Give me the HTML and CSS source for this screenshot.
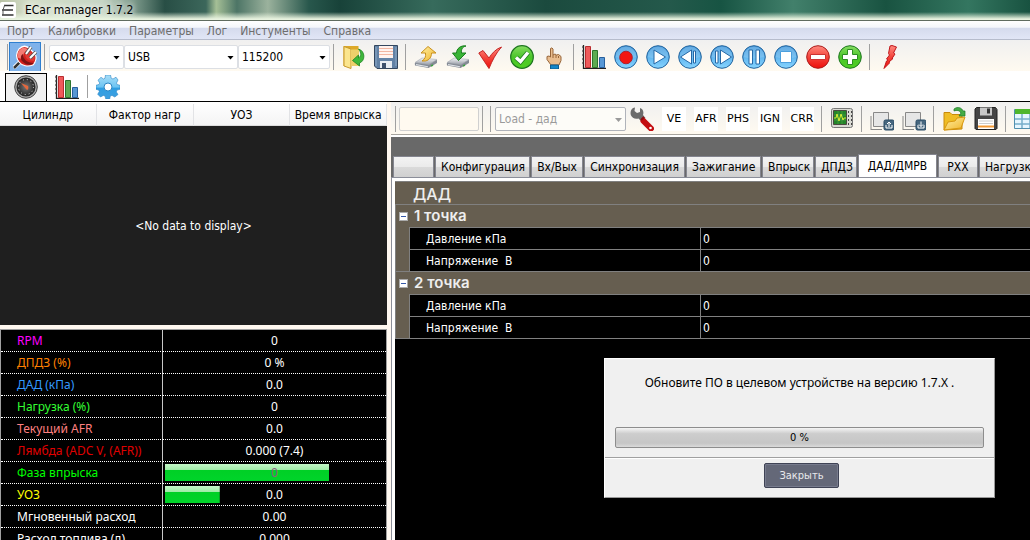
FILE: index.html
```
<!DOCTYPE html>
<html lang="ru">
<head>
<meta charset="utf-8">
<title>ECar manager 1.7.2</title>
<link rel="stylesheet" href="styles.css">
</head>
<body>
<svg class="defs" aria-hidden="true">
  <defs>
    <linearGradient id="blue" x2="0" y2="1"><stop offset="0" stop-color="#4a9bdc"/><stop offset=".5" stop-color="#62b6ee"/><stop offset="1" stop-color="#86d4ff"/></linearGradient>
    <linearGradient id="red" x2="0" y2="1"><stop offset="0" stop-color="#ff8a80"/><stop offset=".5" stop-color="#f4453c"/><stop offset="1" stop-color="#ee0f0a"/></linearGradient>
    <linearGradient id="green" x2="0" y2="1"><stop offset="0" stop-color="#86dd62"/><stop offset=".5" stop-color="#4bc52a"/><stop offset="1" stop-color="#4fd021"/></linearGradient>
    <linearGradient id="gold" x2="1" y2="1"><stop offset="0" stop-color="#fff0a4"/><stop offset="1" stop-color="#f0b429"/></linearGradient>
    <linearGradient id="gear" x2="0" y2="1"><stop offset="0" stop-color="#a9def8"/><stop offset=".5" stop-color="#6cc4f2"/><stop offset=".55" stop-color="#2f9ee2"/><stop offset="1" stop-color="#3f9fe0"/></linearGradient>
    <linearGradient id="steel" x2="0" y2="1"><stop offset="0" stop-color="#f4f5f8"/><stop offset="1" stop-color="#9ca1aa"/></linearGradient>
    <radialGradient id="dial"><stop offset="0" stop-color="#777"/><stop offset="1" stop-color="#222"/></radialGradient>
    <symbol id="i-ball" viewBox="0 0 24 24"><circle cx="12" cy="12" r="11.3" fill="url(#blue)" stroke="#23639c"/><path d="M1.8 12a10.2 10.2 0 0 1 20.4 0q-10 3-20.4 0z" fill="#fff" opacity=".15"/></symbol>
    <symbol id="i-chart" viewBox="0 0 24 24"><path d="M1.5 0v23.500H24" fill="none" stroke="#222" stroke-width="1.300"/><path d="M0 2h2M0 6h2M0 10h2M0 14h2M0 18h2" stroke="#333"/><path d="M3.500 1.500h5v21h-5z" fill="#ef5a5a" stroke="#b92c2f"/><path d="M10.500 5.500h5v17h-5z" fill="#5cab52" stroke="#2c742e"/><path d="M17.500 12.500h5v10h-5z" fill="#5898d5" stroke="#285f9c"/></symbol>
    <symbol id="i-disk" viewBox="0 0 24 24"><path d="M.5 .5h23v23H3L.5 21z" fill="#6382a5" stroke="#34475f"/><path d="M5 1h14v12H5z" fill="#fff3ef"/><path d="M5 3.500h14M5 6.500h14M5 9.500h14" stroke="#f2b6a2"/><path d="M2 2v19M22 2v19" stroke="#8fabc8"/><path d="M6 16h12v7H6z" fill="#e9edf2"/><path d="M8 18h4v5H8z" fill="#3d506b"/></symbol>
    <symbol id="i-drive" viewBox="0 0 24 24"><path d="M.8 18 8 13.500l15 1.500v3l-8.500 5L1 20.500z" fill="#858b95"/><path d="M1 17.500 8 13l15 1.500-8 5z" fill="url(#steel)" stroke="#a7acb4" stroke-width=".6"/><path d="M2 19l12 2.300v1L2 20.300z" fill="#dfe3e7"/><path d="M17 21l2-1" stroke="#3ea143" stroke-width="1.500"/></symbol>
  </defs>
</svg>

<div class="app">
  <header class="titlebar">
    <svg class="logo" viewBox="0 0 16 16"><rect width="16" height="16" rx="2" fill="#fff"/><path d="M4 3.500h9.500M2 8h11M2 13h11.500" stroke="#333" stroke-width="1.500" fill="none"/><path d="M4.500 3.500 3 8v5" fill="none" stroke="#555"/></svg>
    <h1>ECar manager 1.7.2</h1>
  </header>

  <nav class="menu">
    <button>Порт</button><button>Калибровки</button><button>Параметры</button><button>Лог</button><button>Инстументы</button><button>Справка</button>
  </nav>

  <div class="toolbar main-tools">
    <span class="sep"></span>
    <button class="connect" aria-label="Подключить"><svg viewBox="0 0 24 24"><path d="M7 17 .5 23" stroke="#fff" stroke-width="4"/><path d="M7 17 1 23" stroke="#333" stroke-width="2.500"/><path d="M6 4c4-4 8-3 11 0l5 5c2 3 1 8-2 11-5 2-11 1-14-3-3-4-3-9 0-13z" fill="#d3201d" stroke="#fff" stroke-width="1.200"/><path d="M6.500 5c4-4 7-2 9 0-4 1-6 4-5 8-2 1-4 1-6-1 0-3 .5-5 2-7z" fill="#f47b73"/><path d="M10 9c0 5 4 9 11 9-3 3-9 2-12-2-2-3-1-6 1-7z" fill="#7f1414"/><path d="M12 9c0 4 3 7 9 7l1-4-6-7z" fill="#e03a34"/><path d="m13 9 5-7M17 13l6-6" stroke="#555" stroke-width="3.500"/><path d="m13 9 5-7M17 13l6-6" stroke="#fff" stroke-width="2"/></svg></button>
    <span class="sep"></span>
    <label class="combo port"><select aria-label="Порт"><option>COM3</option></select></label>
    <label class="combo link"><select aria-label="Интерфейс"><option>USB</option></select></label>
    <label class="combo baud"><select aria-label="Скорость"><option>115200</option></select></label>
    <span class="sep"></span>
    <button class="tool" aria-label="Открыть"><svg viewBox="0 0 24 24"><path d="M1.500 1h15v20h-15z" fill="#dda928"/><path d="M2 1.500 9 4v19.500L2 21z" fill="#fbe58d" stroke="#c7982b"/><path d="M9 4.500h8V21H9z" fill="#edd06b"/><path d="M16.500 4c7 2 7 12 1 14v3l-7-5.500 6-5.500v3c3-2 3-5 0-9z" fill="#3fb83b" stroke="#1f8421" stroke-width=".8"/></svg></button>
    <button class="tool" aria-label="Сохранить"><svg><use href="#i-disk"/></svg></button>
    <span class="sep"></span>
    <button class="tool" aria-label="Прочитать"><svg viewBox="0 0 24 24"><use href="#i-drive"/><path d="M14 1.500 22 8h-4.500c0 4-2 7-6 8H8c3-2 4-4 3.500-8H7z" fill="url(#gold)" stroke="#c9901d"/></svg></button>
    <button class="tool" aria-label="Записать"><svg viewBox="0 0 24 24"><use href="#i-drive"/><path d="M20 1c-4 1-5 4-4.500 7H20l-7.500 7.500L6.500 8h4c0-4 4-8 9.500-7z" fill="#39b436" stroke="#1b7e20"/></svg></button>
    <button class="tool" aria-label="Применить"><svg viewBox="0 0 24 24"><path d="M.8 8 5 5.500l6 7.500C14 8 18 4 23.500 2 18 8 14 16 11 23.500z" fill="url(#red)" stroke="#c52524"/></svg></button>
    <button class="tool" aria-label="Подтвердить"><svg viewBox="0 0 24 24"><circle cx="12" cy="12" r="11.300" fill="url(#green)" stroke="#1d7520" stroke-width="1.200"/><path d="m6 12.500 4.500 4L18 7.500" fill="none" stroke="#1d7520" stroke-width="5"/><path d="m6 12.500 4.500 4L18 7.500" fill="none" stroke="#fff" stroke-width="3.500"/></svg></button>
    <button class="tool" aria-label="Вручную"><svg viewBox="0 0 24 24"><path d="M8.500 3.500q1.500-1.500 2.500.5v6l2-1 1.500 1 2-.5 2.500 2v4l-2 4.500H9l-4-5.500v-3l2-.5 1.500 1z" fill="#e9bd8f" stroke="#976539"/><path d="M11 10v3m3-3v3m2.500-2v2" stroke="#976539"/><path d="M8.500 20h8v4h-8z" fill="#1486c8" stroke="#0d5c90"/></svg></button>
    <span class="sep"></span>
    <button class="tool" aria-label="График"><svg><use href="#i-chart"/></svg></button>
    <button class="tool" aria-label="Запись"><svg viewBox="0 0 24 24"><use href="#i-ball"/><circle cx="12" cy="12.500" r="6.300" fill="#f21613" stroke="#a82332"/></svg></button>
    <button class="tool" aria-label="Пуск"><svg viewBox="0 0 24 24"><use href="#i-ball"/><path d="M8 5v14l11.500-7z" fill="#fff" stroke="#2568a6"/></svg></button>
    <button class="tool" aria-label="Назад"><svg viewBox="0 0 24 24"><use href="#i-ball"/><path d="M13.500 5v14L2.500 12zM15.500 6h2v12h-2z" fill="#fff" stroke="#2568a6"/></svg></button>
    <button class="tool" aria-label="Вперёд"><svg viewBox="0 0 24 24"><use href="#i-ball"/><path d="M10.500 5v14l11-7zM5.500 6h2.500v12H5.500z" fill="#fff" stroke="#2568a6"/></svg></button>
    <button class="tool" aria-label="Пауза"><svg viewBox="0 0 24 24"><use href="#i-ball"/><path d="M7 5h3.500v14H7zM14 5h3.500v14H14z" fill="#fff" stroke="#2568a6"/></svg></button>
    <button class="tool" aria-label="Стоп"><svg viewBox="0 0 24 24"><use href="#i-ball"/><path d="M6.500 6.500h11v11h-11z" fill="#fff" stroke="#4b9fdd"/></svg></button>
    <button class="tool" aria-label="Убрать"><svg viewBox="0 0 24 24"><circle cx="12" cy="12" r="11.300" fill="url(#red)" stroke="#a91c1b"/><path d="M4.500 9.500h15v5h-15z" fill="#fff" stroke="#c33"/></svg></button>
    <button class="tool" aria-label="Добавить"><svg viewBox="0 0 24 24"><circle cx="12" cy="12" r="11.300" fill="url(#green)" stroke="#1d7520"/><path d="M9.500 4.500h5v5h5v5h-5v5h-5v-5h-5v-5h5z" fill="#fff" stroke="#2c8d22"/></svg></button>
    <span class="sep"></span>
    <button class="tool" aria-label="Сброс"><svg viewBox="0 0 24 24"><path d="m12 1 2-.5L18.500 2l-3 6 1.500 1-3 4.500h1L11 17l.5 1L6 23.500 8.500 16l1.500-1-1.500-1 3-4-1-1.500z" fill="url(#red)" stroke="#c0171c"/></svg></button>
  </div>

  <div class="view-tabs">
    <button class="view-tab active" aria-label="Приборы"><svg viewBox="0 0 24 24"><circle cx="12" cy="12" r="11.300" fill="#aaa" stroke="#444"/><circle cx="12" cy="12" r="9.500" fill="url(#dial)"/><circle cx="12" cy="12" r="7.500" fill="none" stroke="#ddd" stroke-dasharray="1 3"/><path d="m7 8 7 3q1 3-1 4z" fill="#e4683d"/></svg></button>
    <button class="view-tab" aria-label="Графики"><svg><use href="#i-chart"/></svg></button>
    <span class="sep"></span>
    <button class="view-tab" aria-label="Настройки"><svg viewBox="0 0 24 24"><path d="M9.500 0h5l.7 3.200 1.800.8L20 2.200 22 5l-1.500 3 .6 1.500 2.900.8v4l-3 .8-.7 1.800 1.700 2.600L18.800 22 16 20.400l-1.700.7-.6 2.900H9.800L9 21l-1.700-.6L4.500 22 1.700 19.200l1.600-2.700-.6-1.500-2.700-.7v-4l3-.8.700-1.500L2 5.200 5 2.300 7.500 4 9 3.200z" fill="url(#gear)" stroke="#2d86c4" stroke-width=".6"/><circle cx="12" cy="12" r="4" fill="#fff" stroke="#2d86c4"/></svg></button>
  </div>

  <main class="workspace">
    <section class="left">
      <div class="grid-head"><span>Цилиндр</span><span>Фактор нагр</span><span>УОЗ</span><span>Время впрыска</span></div>
      <div class="no-data">&lt;No data to display&gt;</div>
      <table class="gauges">
        <colgroup><col class="name-col"><col></colgroup>
        <tbody>
          <tr class="c-rpm"><th scope="row">RPM</th><td>0</td></tr>
          <tr class="c-tps"><th scope="row">ДПДЗ (%)</th><td>0 %</td></tr>
          <tr class="c-map"><th scope="row">ДАД (кПа)</th><td>0.0</td></tr>
          <tr class="c-load"><th scope="row">Нагрузка (%)</th><td>0</td></tr>
          <tr class="c-afr"><th scope="row">Текущий AFR</th><td>0.0</td></tr>
          <tr class="c-lambda"><th scope="row">Лямбда (ADC V, (AFR))</th><td>0.000 (7.4)</td></tr>
          <tr class="c-phase"><th scope="row">Фаза впрыска</th><td class="bar" style="--fill:75%">0</td></tr>
          <tr class="c-uoz"><th scope="row">УОЗ</th><td class="bar" style="--fill:25%">0.0</td></tr>
          <tr><th scope="row">Мгновенный расход</th><td>0.00</td></tr>
          <tr><th scope="row">Расход топлива (л)</th><td>0.000</td></tr>
        </tbody>
      </table>
    </section>

    <section class="right">
      <div class="toolbar cal-tools">
        <span class="sep"></span>
        <input class="field" type="text" aria-label="Значение" disabled>
        <span class="sep"></span>
        <span class="sep gap"></span>
        <label class="combo load"><select aria-label="Нагрузка" disabled><option>Load - дад</option></select></label>
        <button class="tool" aria-label="Настроить"><svg viewBox="0 0 24 24"><path d="M.8 8C0 4 1.500 1 5 .5L4.500 4 7 6l3-1V1c3 1 4 4 3 7l2.500 3-4 3.500-3-3C5 12.500 2 11 .8 8z" fill="#6b6b6b"/><path d="M13.500 14 21 21.500" stroke="#c40d10" stroke-width="6" stroke-linecap="round"/><path d="m11 13 3-3" stroke="#8b1011" stroke-width="2"/><circle cx="20.500" cy="21" r="1.300" fill="#fff"/></svg></button>
        <button class="tool"><span class="code">VE</span></button>
        <button class="tool"><span class="code">AFR</span></button>
        <button class="tool"><span class="code">PHS</span></button>
        <button class="tool"><span class="code">IGN</span></button>
        <button class="tool"><span class="code">CRR</span></button>
        <span class="sep"></span>
        <button class="tool" aria-label="Осциллограф"><svg viewBox="0 0 24 24"><rect x="1.500" y="1.500" width="21" height="19" rx="2" fill="#d9d9d3" stroke="#777"/><path d="M3.500 3.500h13v14h-13z" fill="#248529" stroke="#4b4b41"/><path d="M4 8h12M4 13h12M8 4v13M12 4v13" stroke="#55a64d" stroke-width=".6"/><path d="M4 11h2l1-4 2 7 2-7 2 6 1-2h2" fill="none" stroke="#d9ee32"/><path d="M18 5h1m2 0h1m-4 4h1m2 0h1m-4 4h1m2 0h1m-4 4h1m2 0h1" stroke="#444" stroke-width="2"/></svg></button>
        <span class="sep"></span>
        <button class="tool" aria-label="Выгрузить"><svg viewBox="0 0 24 24"><path d="M1 23V9M1 22.500h11" fill="none" stroke="#888"/><path d="M3.500 5.500h15v14h-15z" fill="#e6e6e6" stroke="#888"/><rect x="14" y="13" width="10" height="10" rx="1.500" fill="#47677f" stroke="#294b65"/><path d="M16 18v3h6v-3M19 20v-5m-2 2 2-2 2 2" fill="none" stroke="#fff"/></svg></button>
        <button class="tool" aria-label="Загрузить"><svg viewBox="0 0 24 24"><path d="M1 23V9M1 22.500h11" fill="none" stroke="#888"/><path d="M3.500 5.500h15v14h-15z" fill="#e6e6e6" stroke="#888"/><rect x="14" y="13" width="10" height="10" rx="1.500" fill="#47677f" stroke="#294b65"/><path d="M16 18v3h6v-3M19 14.500v5m-2-2 2 2 2-2" fill="none" stroke="#fff"/></svg></button>
        <span class="sep"></span>
        <button class="tool" aria-label="Открыть файл"><svg viewBox="0 0 24 24"><path d="M2 23V5.500h6l2 2h10V22z" fill="#efbd25" stroke="#c88a0c"/><path d="m2 23 4-8 7-1 2-3 8-1-4 11z" fill="url(#gold)" stroke="#d8980f"/><path d="M12 2c4-3 8-1 9 2h2v5h-6l2-3c-2-3-4-3-7-2z" fill="#45ac46" stroke="#1c7929" stroke-width=".7"/></svg></button>
        <button class="tool" aria-label="Сохранить файл"><svg viewBox="0 0 24 24"><path d="M2.500.5h19l1.500 2v19l-1 1H2l-1-1V2z" fill="#454545" stroke="#222"/><path d="M6 .5h12v8H6z" fill="#c7c7c7"/><path d="M13 1.500h3v5h-3z" fill="#333"/><path d="M4 12h16v10H4z" fill="#fff"/><path d="M5 14h14M5 16.500h14" stroke="#ccc"/><path d="M4 18.500h16v2H4z" fill="#f49a35"/></svg></button>
        <span class="sep"></span>
        <button class="tool" aria-label="Таблица"><svg viewBox="0 0 24 24"><path d="M.5 2.500h23v19H.5z" fill="#e5f6ff" stroke="#5190af"/><path d="M1 2h22v5H1z" fill="#4eb62d"/><path d="M1 12h22M1 17h22M8 7v14M16 7v14" stroke="#76afcb" stroke-width="1.500"/></svg></button>
      </div>

      <div class="tabs" role="tablist">
        <button role="tab" class="tab w-blank" aria-label="Общее"></button>
        <button role="tab" class="tab w-l">Конфигурация</button>
        <button role="tab" class="tab w-s">Вх/Вых</button>
        <button role="tab" class="tab w-xl">Синхронизация</button>
        <button role="tab" class="tab w-m">Зажигание</button>
        <button role="tab" class="tab w-s">Впрыск</button>
        <button role="tab" class="tab w-xs">ДПДЗ</button>
        <button role="tab" class="tab active" aria-selected="true">ДАД/ДМРВ</button>
        <button role="tab" class="tab w-xxs">РХХ</button>
        <button role="tab" class="tab">Нагрузка</button>
      </div>

      <div class="sheet">
        <h2 class="sheet-title">ДАД</h2>
        <div class="group">
          <h3><button class="toggle" aria-label="Свернуть"></button>1 точка</h3>
          <dl><dt>Давление кПа</dt><dd>0</dd><dt>Напряжение&nbsp; В</dt><dd>0</dd></dl>
        </div>
        <div class="group">
          <h3><button class="toggle" aria-label="Свернуть"></button>2 точка</h3>
          <dl><dt>Давление кПа</dt><dd>0</dd><dt>Напряжение&nbsp; В</dt><dd>0</dd></dl>
        </div>

        <div class="dialog" role="dialog" aria-labelledby="msg">
          <div class="dialog-body">
            <p id="msg">Обновите ПО в целевом устройстве на версию 1.7.X .</p>
            <div class="progress" role="progressbar" aria-valuenow="0">0 %</div>
          </div>
          <div class="dialog-foot"><button class="close">Закрыть</button></div>
        </div>
      </div>
    </section>
  </main>
</div>
</body>
</html>
```
FILE: styles.css
```
* { box-sizing: border-box; }
body {
  margin: 0;
  font: 12px/16px "DejaVu Sans Condensed", "Noto Sans", sans-serif;
  color: #000;
  background: #fff;
}
button, select, input { font: inherit; color: inherit; margin: 0; padding: 0; border: 0; background: none; }
h1, h2, h3, p, dl, dd { margin: 0; font-weight: normal; }
.defs { position: absolute; width: 0; height: 0; }
.app { display: flex; flex-direction: column; height: 100vh; overflow: hidden; }
.app > * { flex: none; }

.titlebar {
  display: flex;
  align-items: center;
  gap: 9px;
  height: 21px;
  border-bottom: 1px solid #606c60;
  background:
    linear-gradient(to bottom, transparent 60%, #e8f3df 95%),
    linear-gradient(to right, #b8c1a4 0, #d5dfc9 3%, #c5d5c4 10%, #7d9a8b 13%, #284e45 16%, #3c675b 20%, #a5bf96 21%, #4d7566 23%, #9bb29d 26%, #28574c 30%, #184239 33%, #376b5c 42%, #1b4a3e 53%, #24594b 65%, #175443 70%, #42806b 77%, #195341 86%, #347660 94%, #185240 100%);
}
.titlebar h1 { font-size: 12px; text-shadow: 0 0 6px #fff, 0 0 6px #fff; }
.logo { width: 16px; height: 16px; }

.menu {
  display: flex;
  align-items: center;
  gap: 13px;
  height: 19px;
  padding: 2px 7px 0;
  border-bottom: 1px solid #b6bccc;
  background: linear-gradient(#fff 0, #f4f6fb 35%, #d5dbed 40%, #e1e6f6 100%);
}
.menu button { color: #6d6d6d; }

.toolbar { display: flex; align-items: center; background: linear-gradient(#f0f0f0, #fffaf0); }
.sep { flex: none; width: 1px; height: 26px; margin: 0 4px 0 3px; background: #a0a0a0; }
.tool { flex: none; display: grid; place-items: center; width: 32px; height: 24px; }
.tool svg, .connect svg, .view-tab svg { display: block; width: 24px; height: 24px; }

.main-tools { height: 31px; padding: 2px 0 0 4px; overflow: hidden; }
.main-tools > .sep:first-child { margin-right: 1px; }
.connect { flex: none; display: grid; place-items: center; width: 32px; height: 30px; border: 1px solid #2f7fd0; background: #7fb2ea; }
.combo { position: relative; flex: none; display: block; height: 24px; }
.combo::after {
  content: "";
  position: absolute;
  right: 4px;
  top: 11px;
  width: 7px;
  height: 4px;
  background: currentColor;
  clip-path: polygon(0 0, 100% 0, 50% 100%);
  pointer-events: none;
}
.combo select { appearance: none; width: 100%; height: 100%; padding: 0 3px; border: 1px solid #dcdfe4; border-radius: 2px; background: #fff; opacity: 1; }
.port { width: 75px; }
.link { width: 114px; }
.baud { width: 92px; }
.load { width: 131px; color: #9a9a9a; }
.load select { border-color: #b0b3ba; background: #fdfcf8; }

.view-tabs { display: flex; align-items: flex-end; height: 31px; padding-left: 5px; border-bottom: 1px solid #000; }
.view-tab { display: grid; place-items: start center; width: 40px; height: 28px; padding-top: 2px; }
.view-tab.active { width: 42px; border: 1px solid #000; border-bottom: 0; background: #f0f0f0; padding-top: 1px; }
.view-tabs .sep { height: 23px; margin: 0 0 3px; }

.workspace { display: grid; grid-template-columns: 387px minmax(0, 1fr); column-gap: 4px; min-height: 0; background: #fff8f0; }
.app > .workspace { flex: 1; }
.left, .right { display: flex; flex-direction: column; min-width: 0; min-height: 0; overflow: hidden; }

.grid-head { flex: none; display: grid; grid-template-columns: repeat(4, 1fr); height: 24px; padding-top: 2px; background: linear-gradient(#fff, #f4f4f5); border-bottom: 1px solid #ddd; text-align: center; line-height: 22px; white-space: nowrap; }
.grid-head span { border-right: 1px solid #e2e3e6; }
.no-data { flex: none; display: grid; place-items: center; height: 199px; background: #1f1f1f; color: #fff; }
.gauges { flex: none; width: 100%; margin-top: 4px; table-layout: fixed; border-spacing: 0; border: 1px solid #a0a0a0; background: #000; color: #fff; font-family: "Noto Sans", sans-serif; }
.name-col { width: 162px; }
.gauges th, .gauges td { height: 22px; padding: 0; border-bottom: 1px dotted #fff; white-space: nowrap; }
.gauges th { padding-left: 16px; text-align: left; font-weight: normal; border-right: 1px solid #c8c8c8; }
.gauges td { text-align: center; }
.gauges .c-rpm th { color: #f0f; }
.gauges .c-tps th { color: #ff8000; }
.gauges .c-map th { color: #3399ff; }
.gauges .c-load th { color: #33ff33; }
.gauges .c-afr th { color: #ff8080; }
.gauges .c-lambda th { color: #e00000; }
.gauges .c-phase th { color: #00ff00; }
.gauges .c-uoz th { color: #ffff00; }
.gauges .c-phase td { color: #8d5a80; }
.gauges .bar { background: linear-gradient(#c4f7c8 0, #a0eba8 33%, #00d026 36%, #00d42a 100%) 0 2px / var(--fill) 17px no-repeat content-box; padding: 0 2px; }

.cal-tools { flex: none; height: 33px; border-bottom: 1px solid #a8a59f; overflow: hidden; }
.cal-tools .sep { margin-top: 2px; }
.cal-tools > .sep:first-child { margin-left: 4px; margin-right: 3px; }
.cal-tools > * { margin-top: 2px; }
.field { flex: none; width: 80px; height: 24px; border: 1px solid #d0d0d0; border-radius: 2px; background: #fffaf0; }
.cal-tools .gap { margin-left: 3px; }
.code { display: grid; place-items: center; width: 24px; height: 24px; background: #fff; font: 11px/24px "DejaVu Sans", sans-serif; }

.tabs { flex: none; display: flex; align-items: flex-end; gap: 1px; height: 43px; padding-left: 2px; overflow: hidden; background: linear-gradient(#fff 2px, #696969 2px); border-bottom: 1px solid #8b8e99; }
.tab { flex: none; height: 21px; padding: 0 5px; border: 1px solid #84858f; border-bottom: 0; background: linear-gradient(#f3f3f3 0, #ebebeb 48%, #dadada 50%, #d0d0d0 100%); white-space: nowrap; }
.tab.active { width: 79px; height: 23px; background: #fff; }
.w-blank { width: 41px; }
.w-xxs { width: 40px; }
.w-xs { width: 42px; }
.w-s { width: 52px; }
.w-m { width: 75px; }
.w-l { width: 95px; }
.w-xl { width: 101px; }

.sheet { position: relative; flex: 1; min-height: 0; padding: 3px 0 0 3px; border-left: 1px solid #8b8e99; background: linear-gradient(#000, #000) 3px 3px no-repeat #fff; }
.sheet-title, .group h3 { height: 23px; border-top: 1px solid #808080; font-family: Inter, "Noto Sans", sans-serif; color: #eee; background: #665e50; }
.sheet-title { padding-left: 18px; font-size: 16px; font-weight: 500; line-height: 24px; }
.group { background: #665e50; border-left: 1px solid #808080; }
.group:nth-of-type(2) { border-bottom: 1px solid #808080; }
.group h3 { display: flex; align-items: center; gap: 6px; padding-left: 3px; font-size: 15px; font-weight: 600; }
.toggle { width: 9px; height: 9px; border: 1px solid #aaa; background: linear-gradient(#3458a8, #3458a8) center / 5px 1px no-repeat #fff; }
.group dl { display: grid; grid-template-columns: 291px minmax(0, 1fr); margin-left: 13px; border-left: 1px solid #808080; background: #000; color: #fff; }
.group dt, .group dd { height: 22px; border-top: 1px solid #808080; line-height: 22px; }
.group dt { padding-left: 16px; border-right: 1px solid #808080; }
.group dd { padding-left: 2px; }

.dialog { position: absolute; top: 180px; right: 35px; width: 391px; border: 1px solid #fff; border-right-color: #999; border-bottom-color: #999; background: #f0f0f0; }
.dialog-body { padding: 16px 10px 9px; }
.dialog p { text-align: center; font-family: "Noto Sans", sans-serif; }
.progress { height: 21px; margin-top: 36px; border: 1px solid #8d8d8d; border-radius: 2px; background: linear-gradient(#f5f5f5, #cdcdcd 30%, #c6c6c6 80%, #dadada); text-align: center; line-height: 20px; font-size: 11px; }
.dialog-foot { display: flex; justify-content: center; padding: 5px 0 9px 4px; border-top: 1px solid #a0a0a0; box-shadow: inset 0 1px #fff; }
.close { width: 75px; height: 25px; border: 1px solid #3f4355; border-radius: 2px; background: #646878; color: #e8e8ec; font-size: 11px; box-shadow: inset 0 0 0 1px #777b8d; }
```
